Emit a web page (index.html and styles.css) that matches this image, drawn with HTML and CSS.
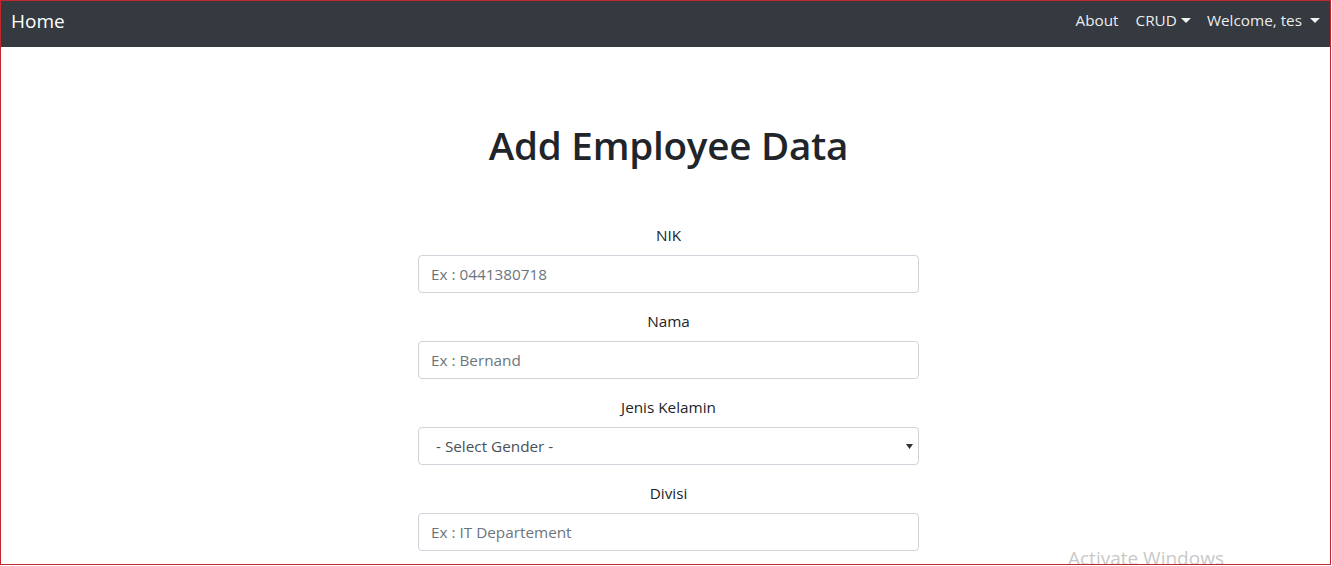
FILE: index.html
```html
<!DOCTYPE html>
<html lang="en">
<head>
<meta charset="utf-8">
<title>Add Employee Data</title>
<link rel="stylesheet" href="styles.css">
</head>
<body>
<div class="frame">
  <nav class="navbar">
    <a class="brand" href="#">Home</a>
    <ul class="nav">
      <li><a class="nav-link" href="#">About</a></li>
      <li><a class="nav-link dropdown" href="#">CRUD<span class="caret"></span></a></li>
      <li><a class="nav-link dropdown" href="#">Welcome, tes<span class="caret wide"></span></a></li>
    </ul>
  </nav>
  <main class="main">
    <h1 class="title">Add Employee Data</h1>
    <form class="form">
      <div class="group">
        <label class="label" for="nik">NIK</label>
        <input class="control" id="nik" type="text" placeholder="Ex : 0441380718">
      </div>
      <div class="group">
        <label class="label" for="nama">Nama</label>
        <input class="control" id="nama" type="text" placeholder="Ex : Bernand">
      </div>
      <div class="group">
        <label class="label" for="jk">Jenis Kelamin</label>
        <div class="select-wrap">
          <select class="control select" id="jk">
            <option>- Select Gender -</option>
            <option>Laki-laki</option>
            <option>Perempuan</option>
          </select>
          <svg class="arrow" width="7" height="5" viewBox="0 0 7 5"><path d="M0 0h7L3.5 5z" fill="#333"/></svg>
        </div>
      </div>
      <div class="group">
        <label class="label" for="div">Divisi</label>
        <input class="control" id="div" type="text" placeholder="Ex : IT Departement">
      </div>
    </form>
  </main>
  <div class="watermark">Activate Windows</div>
</div>
</body>
</html>
```

FILE: styles.css
```css
* { box-sizing: border-box; }
html, body { margin: 0; padding: 0; }
body {
  font-family: "Open Sans", "Noto Sans", "Liberation Sans", sans-serif;
  color: #212529;
  background: #fff;
  width: 1332px;
  height: 566px;
  overflow: hidden;
}
.frame {
  position: relative;
  width: 1331px;
  height: 565px;
  border: 1px solid #c1272d;
  overflow: hidden;
}
.navbar {
  display: flex;
  align-items: center;
  justify-content: space-between;
  height: 46px;
  background: #343a40;
  padding: 0 11px 0 10px;
}
.brand {
  color: #fff;
  font-size: 19px;
  line-height: 30px;
  text-decoration: none;
  margin-top: -7px;
}
.nav {
  list-style: none;
  margin: 0;
  padding: 0;
  display: flex;
  align-items: center;
}
.nav-link {
  display: flex;
  align-items: center;
  color: rgba(255, 255, 255, 0.93);
  text-decoration: none;
  font-size: 15.3px;
  line-height: 24px;
  padding: 0 8px;
  margin-top: -8px;
}
.nav li:first-child .nav-link { padding-left: 7px; }
.nav li:last-child .nav-link { padding-right: 0; margin-right: -1px; }
.nav li:nth-child(2) .nav-link { padding-left: 9px; }
.caret {
  display: inline-block;
  width: 0;
  height: 0;
  margin-left: 4px;
  border-top: 5px solid rgba(255, 255, 255, 0.93);
  border-left: 5px solid transparent;
  border-right: 5px solid transparent;
}
.caret.wide { margin-left: 8px; }
.main {
  padding: 74px 0 0 6px;
}
.title {
  margin: 0 0 54px;
  text-align: center;
  font-size: 38.6px;
  font-weight: 600;
  line-height: 48px;
  letter-spacing: -0.25px;
}
.form {
  width: 501px;
  margin: 0 auto;
}
.group { margin-bottom: 16px; }
.label {
  display: block;
  text-align: center;
  font-size: 15.3px;
  line-height: 24px;
  margin-bottom: 8px;
}
.control {
  display: block;
  width: 100%;
  height: 38px;
  padding: 6px 12px;
  font-family: inherit;
  font-size: 15.3px;
  color: #495057;
  background: #fff;
  border: 1px solid #ced4da;
  border-radius: 4px;
}
.control::placeholder { color: #6c757d; opacity: 1; }
.select-wrap { position: relative; }
.select {
  appearance: none;
  -webkit-appearance: none;
  padding-left: 17px;
}
.arrow {
  position: absolute;
  right: 6px;
  top: 17px;
}
.watermark {
  position: absolute;
  left: 1067px;
  top: 544px;
  font-size: 19px;
  color: #c9c9c9;
  white-space: nowrap;
}
```
